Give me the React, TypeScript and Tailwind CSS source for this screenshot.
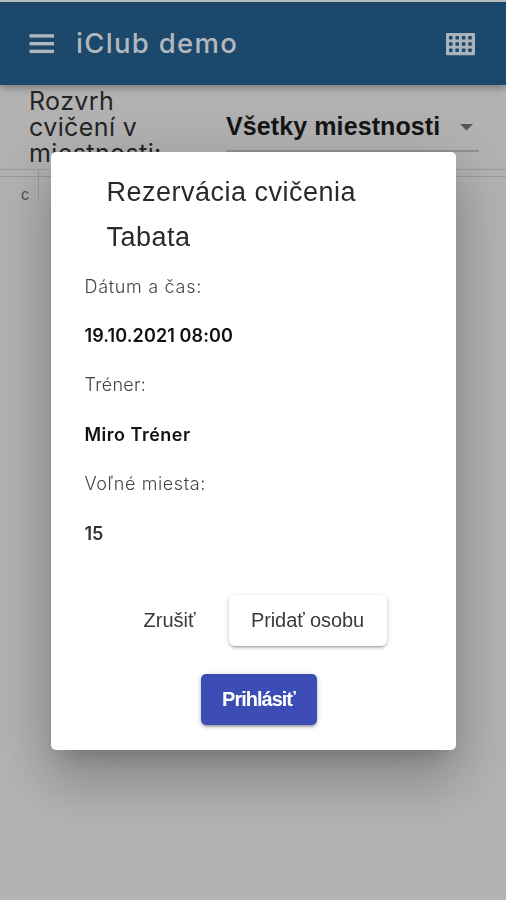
const details = [
  { label: "Dátum a čas:", value: "19.10.2021 08:00", labelClass: "tracking-[0.7px]", valueClass: "tracking-[0.1px]" },
  { label: "Tréner:", value: "Miro Tréner", labelClass: "tracking-[0.3px]", valueClass: "tracking-[0.5px]" },
  { label: "Voľné miesta:", value: "15", labelClass: "tracking-[0.6px]", valueClass: "text-[#333] tracking-[0px]" },
];

function MenuIcon() {
  return (
    <svg width="25" height="20" viewBox="0 0 25 20" fill="#b2b8bd" className="shrink-0">
      <rect x="0.500" y="0.2" width="24.5" height="3.4" />
      <rect x="0.500" y="8" width="24.5" height="3.4" />
      <rect x="0.500" y="15.7" width="24.5" height="3.4" />
    </svg>
  );
}

function CalendarIcon() {
  return (
    <svg width="30" height="24" viewBox="0 0 30 24" className="shrink-0">
      <rect x="0" y="0.9" width="29" height="22.3" rx="1" fill="#aab3ba" />
      {[5.7, 12, 18.3].map((y) =>
        [4.8, 11.2, 17.6, 24].map((x) => (
          <rect key={`${x}-${y}`} x={x - 1.8} y={y - 1.8} width="3.6" height="3.6" rx="0.8" fill="#1b486b" />
        ))
      )}
    </svg>
  );
}

function Header() {
  return (
    <header className="relative z-10 flex h-[85px] items-center border-t-2 border-[#b5babc] bg-[#1b486b] pl-[29px] pr-[30px] shadow-[0_3px_8px_rgba(0,0,0,0.32)]">
      <MenuIcon />
      <h1 className="ml-[22px] font-[Inter,sans-serif] text-[27.5px] font-medium leading-none tracking-[1.3px] text-[#b2b8bd]">
        iClub demo
      </h1>
      <div className="ml-auto">
        <CalendarIcon />
      </div>
    </header>
  );
}

function RoomFilter() {
  return (
    <section className="flex h-[85px] items-start justify-between border-b border-[#9c9c9c] pl-[29px] pr-[27px]">
      <p className="w-[150px] pt-[3px] font-[Inter,sans-serif] text-[25px] leading-[26px] tracking-[0.4px] text-[#252525]">
        Rozvrh cvičení v miestnosti:
      </p>
      <div className="flex h-[67px] w-[253px] items-center border-b-2 border-[#929292] pt-[18px]">
        <span className="whitespace-nowrap text-[25px] font-bold leading-none tracking-[0.1px] text-[#151515]">
          Všetky miestnosti
        </span>
        <svg width="13" height="7" viewBox="0 0 13 7" className="ml-auto mr-[6px] mt-[2px]">
          <path d="M0 0h13L6.500 6.500z" fill="#555" />
        </svg>
      </div>
    </section>
  );
}

export default function App() {
  return (
    <div className="h-[900px] overflow-hidden bg-[#b3b3b3] font-['Liberation_Sans',Arial,sans-serif]">
      <Header />
      <RoomFilter />
      <div className="flex h-[29px]">
        <div className="w-[39px] border-r border-[#9c9c9c]">
          <div className="mt-[6px] h-px bg-[#9c9c9c]" />
          <p className="mt-[11px] pl-[21px] text-[16px] leading-[14px] text-[#555]">c</p>
        </div>
        <div className="mt-[6px] h-px flex-1 bg-[#9c9c9c]" />
      </div>

      <div className="fixed inset-0 z-20 flex items-center justify-center pt-px">
        <div
          role="dialog"
          className="flex h-[598px] w-[405px] flex-col rounded-[5px] bg-white px-[34px] pt-[18px] shadow-[0_15px_21px_-10px_rgba(0,0,0,0.2),0_34px_53px_4px_rgba(0,0,0,0.14),0_13px_64px_11px_rgba(0,0,0,0.12)]"
        >
          <h2 className="pl-[22px] text-[27px] leading-[45px] tracking-[0.5px] text-[#2a2a2a]">
            Rezervácia cvičenia
            <br />
            Tabata
          </h2>
          <dl className="mt-[2px] font-[Inter,sans-serif] text-[18px] leading-[49.4px]">
            {details.map((item) => (
              <div key={item.label}>
                <dt className={`font-light text-[#444] ${item.labelClass}`}>{item.label}</dt>
                <dd className={`font-semibold text-[#111] ${item.valueClass}`}>{item.value}</dd>
              </div>
            ))}
          </dl>
          <div className="mt-[37px] flex items-center pl-[59px] text-[20px] text-[#3a3a3a]">
            <button className="w-[52px] text-left">Zrušiť</button>
            <button className="ml-[33px] h-[51px] w-[158px] whitespace-nowrap rounded-[6px] bg-white tracking-[-0.1px] shadow-[0_4px_2px_-3px_rgba(0,0,0,0.2),0_2px_3px_rgba(0,0,0,0.14),0_1px_6px_rgba(0,0,0,0.12)]">
              Pridať osobu
            </button>
          </div>
          <button className="ml-[116px] mt-[28px] h-[51px] w-[116px] rounded-[5px] bg-[#3c4db5] text-[20px] font-bold tracking-[-1px] text-white shadow-[0_4px_2px_-3px_rgba(0,0,0,0.2),0_2px_3px_rgba(0,0,0,0.2),0_1px_6px_rgba(0,0,0,0.16)]">
            Prihlásiť
          </button>
        </div>
      </div>
    </div>
  );
}
